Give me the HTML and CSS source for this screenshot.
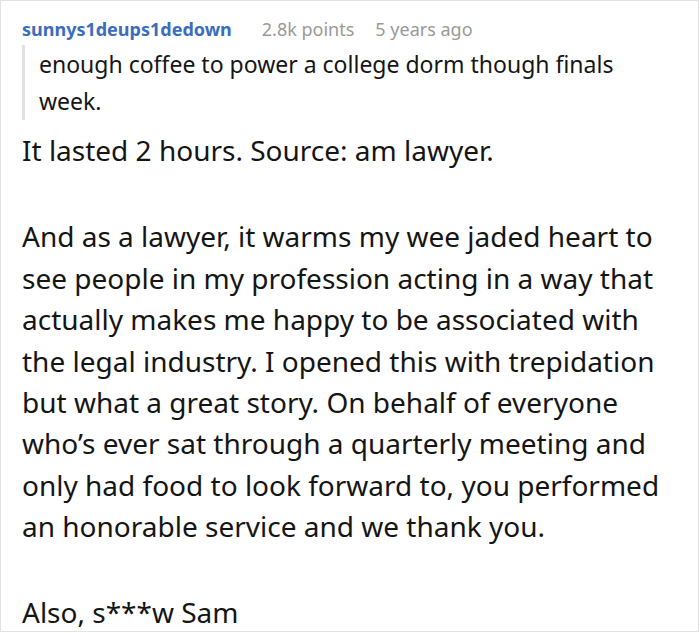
FILE: index.html
```html
<!DOCTYPE html>
<html>
<head>
<meta charset="utf-8">
<link rel="stylesheet" href="styles.css">
</head>
<body>
<div class="card">
  <div class="meta">
    <span class="user">sunnys1deups1dedown</span>
    <span class="info">2.8k points</span>
    <span class="info">5 years ago</span>
  </div>
  <blockquote class="quote">enough coffee to power a college dorm though finals week.</blockquote>
  <p class="para first">It lasted 2 hours. Source: am lawyer.</p>
  <p class="para">And as a lawyer, it warms my wee jaded heart to see people in my profession acting in a way that actually makes me happy to be associated with the legal industry. I opened this with trepidation but what a great story. On behalf of everyone who’s ever sat through a quarterly meeting and only had food to look forward to, you performed an honorable service and we thank you.</p>
  <p class="para">Also, s***w Sam</p>
</div>
</body>
</html>
```
FILE: styles.css
```css
html, body {
  margin: 0;
  padding: 0;
  background: #ffffff;
}
.card {
  box-sizing: border-box;
  width: 699px;
  height: 632px;
  border: 1px solid #e2e2e2;
  padding: 14px 20px 0 21px;
  font-family: "Noto Sans", "Open Sans", sans-serif;
  color: #151515;
  overflow: hidden;
}
.meta {
  display: flex;
  font-size: 18px;
  line-height: 28px;
}
.user {
  color: #3a6cc0;
  font-weight: 700;
  margin-right: 30px;
}
.info {
  color: #9a9a9a;
  margin-right: 21px;
}
.quote {
  margin: 2px 0 0 0;
  border-left: 3px solid #e2e2e2;
  padding: 1px 0 0 14px;
  font-size: 23px;
  line-height: 37px;
}
.para {
  margin: 44px 0 0 0;
  font-size: 28px;
  line-height: 41.4px;
}
.para.first {
  margin-top: 10px;
}
.para.first + .para {
  margin-top: 45px;
}
```
